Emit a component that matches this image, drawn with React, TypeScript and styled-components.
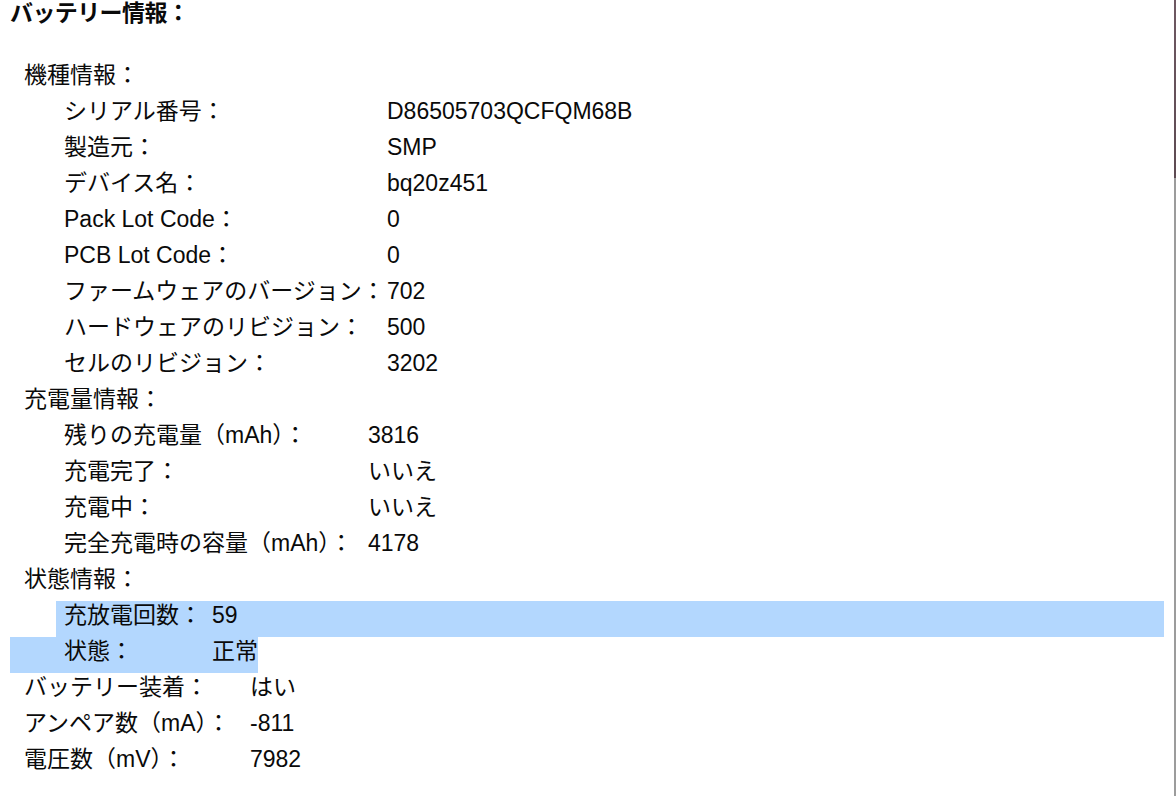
import React from "react";
import styled, { createGlobalStyle, css } from "styled-components";

type Item = { label: string; value: string; mark?: "tail" | "head" };
type Group = { title?: string; labelWidth: number; items: Item[] };

const groups: Group[] = [
  {
    title: "機種情報：",
    labelWidth: 323,
    items: [
      { label: "シリアル番号：", value: "D86505703QCFQM68B" },
      { label: "製造元：", value: "SMP" },
      { label: "デバイス名：", value: "bq20z451" },
      { label: "Pack Lot Code：", value: "0" },
      { label: "PCB Lot Code：", value: "0" },
      { label: "ファームウェアのバージョン：", value: "702" },
      { label: "ハードウェアのリビジョン：", value: "500" },
      { label: "セルのリビジョン：", value: "3202" }
    ]
  },
  {
    title: "充電量情報：",
    labelWidth: 304,
    items: [
      { label: "残りの充電量（mAh）：", value: "3816" },
      { label: "充電完了：", value: "いいえ" },
      { label: "充電中：", value: "いいえ" },
      { label: "完全充電時の容量（mAh）：", value: "4178" }
    ]
  },
  {
    title: "状態情報：",
    labelWidth: 148,
    items: [
      { label: "充放電回数：", value: "59", mark: "tail" },
      { label: "状態：", value: "正常", mark: "head" }
    ]
  }
];

const topItems: Item[] = [
  { label: "バッテリー装着：", value: "はい" },
  { label: "アンペア数（mA）：", value: "-811" },
  { label: "電圧数（mV）：", value: "7982" }
];

export default function App() {
  return (
    <>
      <GlobalStyle />
      <Page>
        <Content>
          <Title>バッテリー情報：</Title>
          {groups.map(group => (
            <div key={group.title}>
              <SectionTitle>{group.title}</SectionTitle>
              {group.items.map(item => (
                <Row
                  key={item.label}
                  $indent={54}
                  $labelWidth={group.labelWidth}
                  $mark={item.mark}
                >
                  <Label>{item.label}</Label>
                  <Value>{item.value}</Value>
                </Row>
              ))}
            </div>
          ))}
          {topItems.map(item => (
            <Row key={item.label} $indent={14} $labelWidth={226}>
              <Label>{item.label}</Label>
              <Value>{item.value}</Value>
            </Row>
          ))}
        </Content>
        <WindowEdge />
      </Page>
    </>
  );
}

const GlobalStyle = createGlobalStyle`
  html, body {
    margin: 0;
    padding: 0;
    background: #ffffff;
  }
  body {
    font-family: "Liberation Sans", "Noto Sans CJK JP", sans-serif;
    color: #0a0a0a;
  }
`;

const Page = styled.div`
  display: flex;
  width: 1176px;
  height: 796px;
  overflow: hidden;
  background: #ffffff;
`;

const Content = styled.div`
  flex: 1;
  padding: 0 10px;
`;

const WindowEdge = styled.div`
  width: 2px;
  background: linear-gradient(
    to bottom,
    #6e5862 0px,
    #5d4a52 178px,
    #9c9c9c 178px,
    #9c9c9c 100%
  );
`;

const Title = styled.div`
  height: 27px;
  line-height: 27px;
  margin-bottom: 34px;
  font-size: 23px;
  font-weight: 700;
  letter-spacing: -0.6px;
`;

const SectionTitle = styled.div`
  height: 36px;
  line-height: 28px;
  padding-left: 14px;
  font-size: 23px;
`;

const Row = styled.div<{
  $indent: number;
  $labelWidth: number;
  $mark?: "tail" | "head";
}>`
  display: grid;
  grid-template-columns: ${p => p.$labelWidth}px auto;
  height: 36px;
  line-height: 28px;
  padding-left: ${p => p.$indent}px;
  font-size: 23px;

  ${p =>
    p.$mark === "tail" &&
    css`
      margin-left: 46px;
      padding-left: ${p.$indent - 46}px;
      background: #b3d7fe;
    `}

  ${p =>
    p.$mark === "head" &&
    css`
      width: max-content;
      margin-right: auto;
      background: #b3d7fe;
    `}
`;

const Label = styled.span`
  white-space: nowrap;
`;

const Value = styled.span`
  white-space: nowrap;
`;
